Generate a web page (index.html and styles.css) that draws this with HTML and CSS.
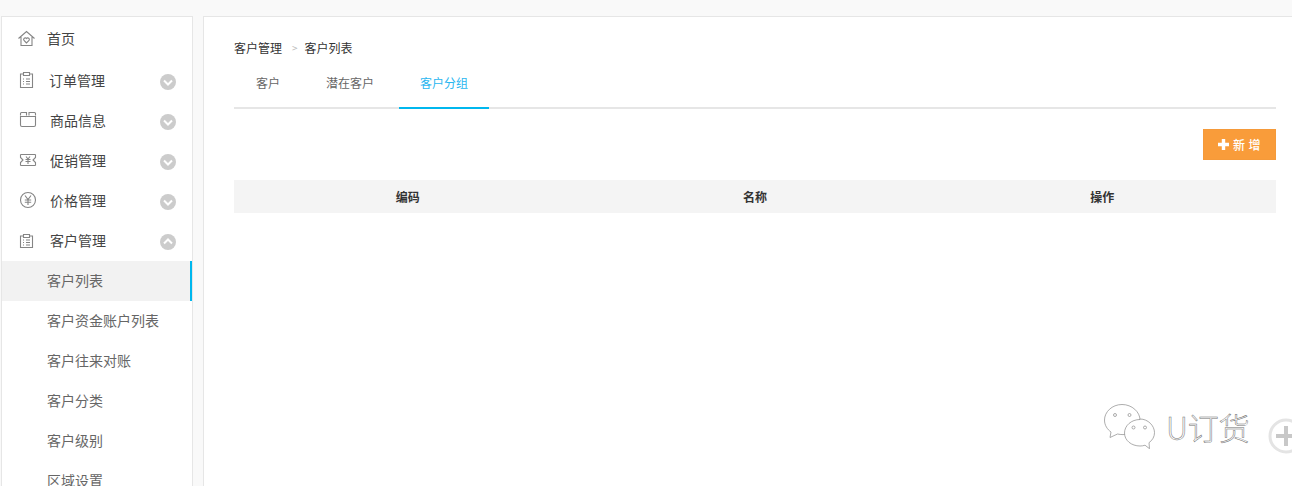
FILE: index.html
```html
<!DOCTYPE html>
<html lang="zh-CN">
<head>
<meta charset="utf-8">
<title>客户分组</title>
<link rel="stylesheet" href="styles.css">
</head>
<body>
<div class="topbar"></div>
<div class="layout">
  <aside class="sidebar">
    <a class="nav home">
      <svg class="ico" viewBox="0 0 20 20"><path d="M.5 10.500 8.500 3.500l8 7M3 9V17.500H14V9"/><path d="M8.500 15 6 12.500a1.500 1.500 0 0 1 2.500-2 1.500 1.500 0 0 1 2.500 2z"/></svg>
      <span class="t">首页</span>
    </a>
    <a class="nav off1">
      <svg class="ico" viewBox="0 0 20 20"><path d="M5.500 4H2.500V17.500H14.500V4H11.500M5.500 2.500H11.500V5.500H5.500z"/><path d="M5 9h1m2 0h4M5 11.500h1m2 0h4M5 14h1m2 0h4"/></svg>
      <span class="t">订单管理</span><i class="chev"><svg viewBox="0 0 16 16"><path d="M4 6.500 8 10.500 12 6.500"/></svg></i>
    </a>
    <a class="nav off2">
      <svg class="ico" viewBox="0 0 20 20"><path d="M2.500 6.500H17.500V15A1.500 1.500 0 0 1 16 16.500H4A1.500 1.500 0 0 1 2.500 15zM2.500 5.500V3.500A1 1 0 0 1 3.500 2.500H8.500V5.500M11 5.500V2.500H16.500A1 1 0 0 1 17.500 3.500V5.500"/></svg>
      <span class="t">商品信息</span><i class="chev"><svg viewBox="0 0 16 16"><path d="M4 6.500 8 10.500 12 6.500"/></svg></i>
    </a>
    <a class="nav off2">
      <svg class="ico" viewBox="0 0 20 20"><path d="M2.500 4.500H17.500M2.500 15.500H17.500M2.500 4.500V7.500L5 10 2.500 12.500V15.500M17.500 4.500V7.500L15 10 17.500 12.500V15.500"/><path d="M8 6.500l2 2.500 2-2.500M7.500 9.500h5M7.500 11.500h5M10 9V14"/></svg>
      <span class="t">促销管理</span><i class="chev"><svg viewBox="0 0 16 16"><path d="M4 6.500 8 10.500 12 6.500"/></svg></i>
    </a>
    <a class="nav off2">
      <svg class="ico" viewBox="0 0 20 20"><circle cx="10" cy="10" r="7.500"/><path d="M7 5.500l3 4 3-4M6.800 10h6.400M6.800 12.200h6.400M10 9.500V15"/></svg>
      <span class="t">价格管理</span><i class="chev"><svg viewBox="0 0 16 16"><path d="M4 6.500 8 10.500 12 6.500"/></svg></i>
    </a>
    <a class="nav off2">
      <svg class="ico low" viewBox="0 0 20 20"><path d="M5.500 4H2.500V15.500H14.500V4H11.500M5.500 2.500H11.500V5.500H5.500z"/><path d="M5 8h1m2 0h4M5 10.500h1m2 0h4M5 13h1m2 0h4"/></svg>
      <span class="t">客户管理</span><i class="chev"><svg viewBox="0 0 16 16"><path d="M4 9.500 8 5.500 12 9.500"/></svg></i>
    </a>
    <a class="sub active">客户列表</a>
    <a class="sub">客户资金账户列表</a>
    <a class="sub">客户往来对账</a>
    <a class="sub">客户分类</a>
    <a class="sub">客户级别</a>
    <a class="sub">区域设置</a>
  </aside>
  <main class="main">
    <div class="crumbs"><span>客户管理</span><em>&gt;</em><span>客户列表</span></div>
    <div class="tabs">
      <a class="tab">客户</a>
      <a class="tab">潜在客户</a>
      <a class="tab on">客户分组</a>
    </div>
    <div class="actions"><button class="add"><svg class="plus" viewBox="0 0 11 11"><path d="M5.500 0V11M0 5.500H11"/></svg>新 增</button></div>
    <div class="thead"><div>编码</div><div>名称</div><div>操作</div></div>
  </main>
</div>
<div class="mark">
  <svg class="wx" viewBox="0 0 51 45"><path d="M18 .5C8 .5.5 8 .5 16c0 5.500 3 9.500 6.500 12l-1 5.500 7.500-3.500c1.700.4 3.500.6 5.500.6 10 0 17-7 17-14.600C36 8 28 .5 18 .5z"/><path d="M36 15.500c-8.500 0-15.500 6-15.500 13.500S27.500 42 36 42c1.800 0 3.300-.2 5-.8l4.500 3.500-.5-6c3.500-2.500 5.500-6 5.500-10 0-7-6.500-13.700-14.500-13.700z"/><circle cx="11" cy="11" r="1.500"/><circle cx="25.500" cy="11" r="1.500"/><circle cx="29.500" cy="23.500" r="1.500"/><circle cx="41" cy="23.500" r="1.500"/></svg>
  <span class="brand">U订货</span>
</div>
<div class="fab"><svg viewBox="0 0 36 36"><circle cx="18" cy="18" r="16"/><path d="M18 8V28M8 18H28"/></svg></div>
</body>
</html>
```
FILE: styles.css
```css
* { box-sizing: border-box; }
html, body { margin: 0; height: 486px; overflow: hidden; }
body {
  background: #f9f9f9;
  font-family: "Noto Sans CJK SC", "Liberation Sans", sans-serif;
  color: #333;
  position: relative;
}
.topbar { height: 16px; }
.layout { display: flex; height: 470px; padding-left: 1px; }
.sidebar {
  width: 192px;
  height: 480px;
  flex: none;
  background: #fff;
  border: 1px solid #e6e6e6;
  border-bottom: 0;
}
.nav {
  height: 40px;
  display: flex;
  align-items: center;
  font-size: 14px;
  color: #444;
  padding-left: 16px;
  padding-bottom: 2px;
}
.nav.home { height: 44px; }
.ico {
  width: 20px;
  height: 20px;
  flex: none;
  fill: none;
  stroke: #858585;
  stroke-width: 1.1;
}
.ico.low { margin-top: 4px; }
.t { margin-left: 9px; line-height: 20px; }
.off1 .t { margin-left: 11px; }
.off2 .t { margin-left: 12px; }
.chev {
  margin-left: auto;
  margin-right: 16px;
  margin-top: 4px;
  width: 16px;
  height: 16px;
  border-radius: 50%;
  background: #ccc;
  display: block;
}
.chev svg {
  display: block;
  width: 16px;
  height: 16px;
  fill: none;
  stroke: #fff;
  stroke-width: 2;
}
.sub {
  display: block;
  height: 40px;
  line-height: 38px;
  padding-left: 45px;
  font-size: 14px;
  color: #666;
}
.sub.active {
  background: #f2f2f2;
  border-right: 2px solid #00b7ee;
}
.main {
  margin-left: 10px;
  flex: 1;
  height: 480px;
  background: #fff;
  border: 1px solid #e6e6e6;
  border-right: 0;
  border-bottom: 0;
  padding: 22px 16px 0 30px;
}
.crumbs {
  font-size: 12px;
  line-height: 18px;
  color: #333;
  display: flex;
}
.crumbs em {
  font-style: normal;
  color: #bbb;
  margin: 0 7px 0 10px;
  font-size: 10px;
}
.tabs {
  display: flex;
  height: 43px;
  margin-top: 9px;
  border-bottom: 2px solid #e6e6e6;
}
.tab {
  font-size: 12px;
  color: #666;
  line-height: 32px;
  height: 43px;
  text-align: center;
  padding-top: 1px;
}
.tab:nth-child(1) { width: 68px; }
.tab:nth-child(2) { width: 97px; padding-right: 1px; }
.tab:nth-child(3) { width: 90px; }
.tab.on {
  color: #29b6f0;
  border-bottom: 2px solid #00b7ee;
}
.actions {
  display: flex;
  justify-content: flex-end;
  margin-top: 20px;
}
.add {
  width: 73px;
  height: 31px;
  background: #f99c3a;
  border: 1px solid #f59a3a;
  color: #fff;
  font: 500 12px "Noto Sans CJK SC", sans-serif;
  letter-spacing: .5px;
  padding: 0;
  display: flex;
  align-items: center;
  justify-content: center;
}
.plus {
  width: 11px;
  height: 11px;
  margin-right: 4px;
  fill: none;
  stroke: #fff;
  stroke-width: 3.4;
}
.thead {
  display: grid;
  grid-template-columns: repeat(3, 1fr);
  margin-top: 20px;
  height: 33px;
  background: #f4f4f4;
  line-height: 33px;
  font-size: 12px;
  font-weight: 700;
  text-align: center;
}
.mark {
  position: absolute;
  left: 1104px;
  top: 404px;
  display: flex;
  align-items: flex-start;
  gap: 11px;
}
.wx {
  width: 51px;
  height: 45px;
  flex: none;
  fill: #fff;
  stroke: #8a8a8a;
  stroke-width: .7;
}
.brand {
  font-size: 31px;
  line-height: 46px;
  color: #fff;
  -webkit-text-stroke: .5px #707070;
  font-family: "Noto Sans CJK SC", sans-serif;
  font-weight: 300;
  white-space: nowrap;
}
.fab {
  position: absolute;
  left: 1268px;
  top: 418px;
  width: 36px;
  height: 36px;
}
.fab svg { display: block; fill: #fff; stroke: #e4e4e4; stroke-width: 3; }
.fab path { stroke: #c8c8c8; stroke-width: 4; fill: none; }
```
